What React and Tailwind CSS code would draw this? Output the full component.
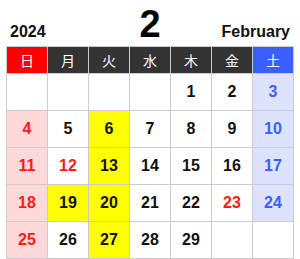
const days = [
  { label: "日", cls: "bg-[#ff0000]" },
  { label: "月", cls: "bg-[#333333]" },
  { label: "火", cls: "bg-[#333333]" },
  { label: "水", cls: "bg-[#333333]" },
  { label: "木", cls: "bg-[#333333]" },
  { label: "金", cls: "bg-[#333333]" },
  { label: "土", cls: "bg-[#3b5eff]" },
];

// Feb 2024 starts on Thursday
const cells = [
  null, null, null, null, 1, 2, 3,
  4, 5, 6, 7, 8, 9, 10,
  11, 12, 13, 14, 15, 16, 17,
  18, 19, 20, 21, 22, 23, 24,
  25, 26, 27, 28, 29, null, null,
];

const holidays = [11, 12, 23];
const marked = [6, 13, 19, 20, 27];

function cellStyle(day, col) {
  if (!day) return "bg-white";
  let bg = "bg-white";
  let text = "text-[#111]";
  if (col === 0) {
    bg = "bg-[#ffd9d9]";
    text = "text-[#ff1a1a]";
  }
  if (col === 6) {
    bg = "bg-[#dde3ff]";
    text = "text-[#3b5eff]";
  }
  if (holidays.includes(day)) text = "text-[#ff1a1a]";
  if (marked.includes(day)) bg = "bg-[#ffff00]";
  return `${bg} ${text}`;
}

export default function App() {
  return (
    <div className="w-[300px] h-[259px] bg-white font-['Liberation_Sans',Arial,sans-serif] overflow-hidden">
      {/* Title */}
      <div className="h-[46px] grid grid-cols-[1fr_auto_1fr] items-baseline px-[10px] pt-[5px]">
        <span className="text-[16px] font-bold text-[#111]">2024</span>
        <span className="text-[38px] leading-none font-bold text-black">2</span>
        <span className="text-[16px] font-bold text-[#111] text-right">February</span>
      </div>

      {/* Calendar */}
      <div className="mx-[6px] grid grid-cols-7 gap-px bg-[#cccccc] p-px">
        {days.map((d) => (
          <div
            key={d.label}
            className={`${d.cls} h-[26px] flex items-center justify-center text-white text-[14px] font-['Noto_Sans_CJK_JP',sans-serif]`}
          >
            {d.label}
          </div>
        ))}
        {cells.map((day, i) => (
          <div
            key={i}
            className={`${cellStyle(day, i % 7)} h-[36px] flex items-center justify-center text-[16px] font-bold`}
          >
            {day}
          </div>
        ))}
      </div>
    </div>
  );
}
